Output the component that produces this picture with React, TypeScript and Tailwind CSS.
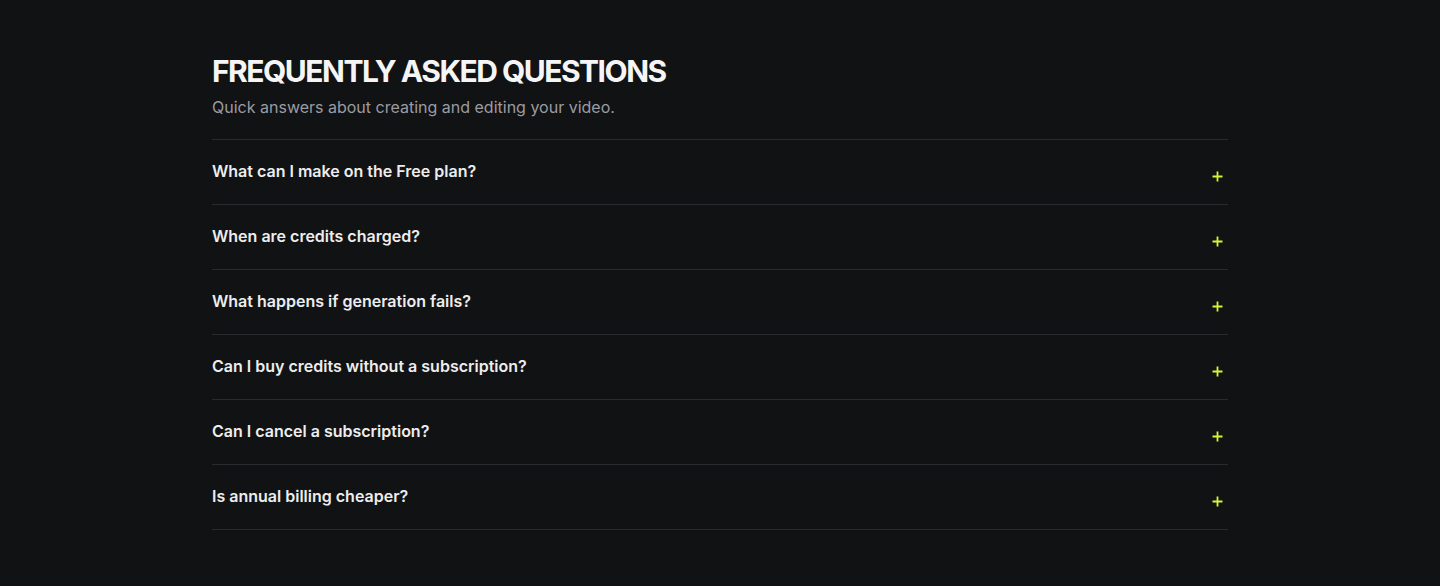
const faqs = [
  'What can I make on the Free plan?',
  'When are credits charged?',
  'What happens if generation fails?',
  'Can I buy credits without a subscription?',
  'Can I cancel a subscription?',
  'Is annual billing cheaper?',
];

function PlusIcon() {
  return (
    <svg width="11" height="11" viewBox="0 0 11 11" fill="none" className="shrink-0">
      <path d="M5.5 0.5v10M0.5 5.5h10" stroke="#d2f53a" strokeWidth="1.8" />
    </svg>
  );
}

export default function App() {
  return (
    <div
      className="min-h-[586px] w-full bg-[#111214] text-white"
      style={{ fontFamily: 'Inter, "Noto Sans", sans-serif' }}
    >
      <section className="mx-auto w-[1016px] pt-[53px] pb-14">
        <h2 className="text-[30px] font-bold uppercase leading-[36px] tracking-[-0.05em] text-[#f5f5f5]">
          Frequently asked questions
        </h2>
        <p className="mt-1.5 text-base leading-6 text-[#9a9ca1]">
          Quick answers about creating and editing your video.
        </p>
        <div className="mt-5 border-t border-[#2a2b2f]">
          {faqs.map((q) => (
            <div key={q} className="flex items-center justify-between border-b border-[#2a2b2f] pt-[19px] pb-[21px]">
              <span className="text-base font-semibold leading-6 text-[#ededed]">{q}</span>
              <span className="mt-[10px] mr-[5px] flex">
                <PlusIcon />
              </span>
            </div>
          ))}
        </div>
      </section>
    </div>
  );
}
